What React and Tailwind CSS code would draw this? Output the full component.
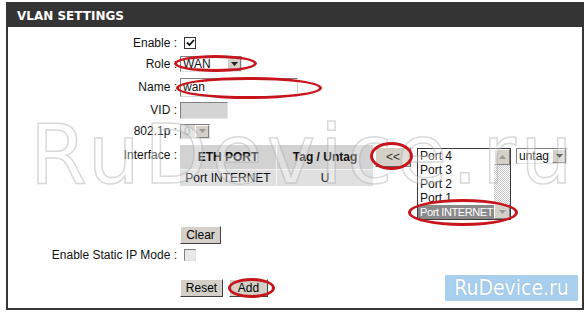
import React from 'react';

function Label({ children }) {
  return <div className="w-[170px] shrink-0 text-right pr-[1px] text-[12px] text-[#111]">{children}</div>;
}

function Arrow({ up = false, light = false }) {
  return (
    <svg width="7" height="4" viewBox="0 0 7 4" className={up ? 'rotate-180' : ''}>
      <path d="M0 0 L7 0 L3.5 4 Z" fill={light ? '#9a9a9a' : '#222'} />
    </svg>
  );
}

function DropBtn({ light = false }) {
  return (
    <span className="w-[14px] h-full flex items-center justify-center bg-[#d4d0c8] border-l border-t border-white border-r border-b border-r-[#808080] border-b-[#808080]">
      <Arrow light={light} />
    </span>
  );
}

function Btn({ children, w }) {
  return (
    <button className={`${w} h-[18px] bg-[#d4d0c8] border border-t-white border-l-white border-b-[#404040] border-r-[#404040] text-[12px] leading-none text-black`}>
      {children}
    </button>
  );
}

function Ellipse({ cls }) {
  return <div className={`absolute rounded-[50%] border-[3px] border-[#c8141c] pointer-events-none ${cls}`} />;
}

export default function App() {
  const ports = ['Port 4', 'Port 3', 'Port 2', 'Port 1'];
  return (
    <div className="relative w-[588px] h-[312px] bg-white overflow-hidden font-['Liberation_Sans',Arial,sans-serif]">
      <div className="ml-[6px] mt-[2px] w-[578px] h-[308px] flex flex-col">
        <div className="h-[25px] shrink-0 bg-[#343434] text-white font-bold text-[12px] pl-[11px] pt-[2px] flex items-center font-['DejaVu_Sans',Verdana,sans-serif]">
          VLAN SETTINGS
        </div>
        <div className="flex-1 border-2 border-t-0 border-[#353535] flex flex-col pt-[6px]">
          <div className="h-[20px] flex items-center">
            <Label>Enable :</Label>
            <span className="ml-[6px] w-[12px] h-[12px] border border-[#333] bg-white flex items-center justify-center">
              <svg width="9" height="8" viewBox="0 0 9 8">
                <path d="M1 3.5 L3.5 6 L8 1" stroke="#111" strokeWidth="1.8" fill="none" />
              </svg>
            </span>
          </div>
          <div className="h-[21px] flex items-center">
            <Label>Role :</Label>
            <span className="ml-[2px] w-[62px] h-[16px] flex items-stretch bg-white border border-t-[#808080] border-l-[#808080] border-r-[#e0e0e0] border-b-[#e0e0e0]">
              <span className="flex-1 pl-[2px] text-[12px] leading-[14px] text-[#111]">WAN</span>
              <DropBtn />
            </span>
          </div>
          <div className="h-[26px] flex items-center">
            <Label>Name :</Label>
            <span className="ml-[2px] w-[118px] h-[19px] bg-white border border-t-[#808080] border-l-[#808080] border-r-[#d8d8d8] border-b-[#d8d8d8] pl-[2px] text-[12px] leading-[17px] text-[#111]">
              wan
            </span>
          </div>
          <div className="h-[20px] flex items-center">
            <Label>VID :</Label>
            <span className="ml-[2px] w-[48px] h-[17px] bg-[#d4d4d4] border border-t-[#808080] border-l-[#808080] border-r-[#e8e8e8] border-b-[#e8e8e8]" />
          </div>
          <div className="h-[22px] flex items-center">
            <Label>802.1p :</Label>
            <span className="ml-[2px] w-[30px] h-[15px] flex items-stretch bg-[#d8d8d8] border border-t-[#808080] border-l-[#808080] border-r-[#e0e0e0] border-b-[#e0e0e0]">
              <span className="flex-1 pl-[3px] text-[11px] leading-[13px] text-[#9a9a9a]">0</span>
              <DropBtn light />
            </span>
          </div>
          <div className="h-[78px] mt-[3px] flex items-start">
            <div className="pt-[1px]">
              <Label>Interface :</Label>
            </div>
            <div className="ml-[2px] w-[192px] grid grid-cols-[96px_96px] gap-px bg-[#f2f2f2] text-[12px] text-[#111]">
              <div className="h-[24px] bg-[#d2d2d2] font-bold flex items-center justify-center">ETH PORT</div>
              <div className="h-[24px] bg-[#d2d2d2] font-bold flex items-center justify-center">Tag / Untag</div>
              <div className="h-[16px] bg-[#e0e0e0] flex items-center justify-center">Port INTERNET</div>
              <div className="h-[16px] bg-[#e0e0e0] flex items-center justify-center">U</div>
            </div>
            <button className="ml-[3px] mt-[2px] w-[36px] h-[20px] bg-[#d4d0c8] border border-t-white border-l-white border-b-[#606060] border-r-[#606060] text-[12px] leading-none text-[#333]">
              &lt;&lt;
            </button>
            <div className="ml-[6px] mt-[3px] w-[94px] h-[72px] bg-white border border-[#3a3a3a] flex">
              <div className="flex-1 flex flex-col text-[12px] leading-[14px] text-[#111]">
                {ports.map((p) => (
                  <div key={p} className="h-[14px] pl-[2px]">{p}</div>
                ))}
                <div className="h-[14px] pl-[2px] bg-[#8a8a8a] text-white text-[11px] tracking-[-0.4px]">Port INTERNET</div>
              </div>
              <div className="w-[16px] flex flex-col [background:repeating-conic-gradient(#c4c4c4_0%_25%,#ffffff_0%_50%)_0_0/2px_2px]">
                <span className="h-[16px] bg-[#d4d0c8] border border-t-white border-l-white border-b-[#808080] border-r-[#808080] flex items-center justify-center">
                  <Arrow up light />
                </span>
                <span className="flex-1" />
                <span className="h-[15px] bg-[#d4d0c8] border border-t-white border-l-white border-b-[#808080] border-r-[#808080] flex items-center justify-center">
                  <Arrow light />
                </span>
              </div>
            </div>
            <span className="ml-[5px] mt-[3px] w-[51px] h-[16px] flex items-stretch bg-white border border-t-[#808080] border-l-[#808080] border-r-[#e0e0e0] border-b-[#e0e0e0]">
              <span className="flex-1 pl-[2px] text-[12px] leading-[14px] text-[#111]">untag</span>
              <DropBtn />
            </span>
          </div>
          <div className="h-[22px] flex items-center">
            <div className="w-[170px] shrink-0" />
            <span className="ml-[2px]"><Btn w="w-[41px]">Clear</Btn></span>
          </div>
          <div className="h-[20px] flex items-center">
            <Label>Enable Static IP Mode :</Label>
            <span className="ml-[6px] w-[12px] h-[12px] border border-t-[#808080] border-l-[#808080] border-b-[#e0e0e0] border-r-[#e0e0e0] bg-[#e8e8e8]" />
          </div>
          <div className="h-[18px] mt-[14px] flex items-center">
            <div className="w-[170px] shrink-0" />
            <span className="ml-[2px] flex gap-[6px]">
              <Btn w="w-[43px]">Reset</Btn>
              <Btn w="w-[39px]">Add</Btn>
            </span>
          </div>
        </div>
      </div>

      <div className="absolute left-[30px] top-[114px] text-[82px] leading-none tracking-[4.5px] font-['DejaVu_Sans',sans-serif] text-white/30 [-webkit-text-stroke:1.5px_rgba(170,170,170,0.45)] pointer-events-none whitespace-nowrap">
        RuDevice.ru
      </div>

      <div className="absolute left-[445px] top-[275px] w-[133px] h-[26px] bg-[#a8cfee] flex items-center justify-center text-white text-[21px] leading-none font-['DejaVu_Sans_Condensed','Liberation_Sans',sans-serif] [text-shadow:0_0_1px_#7fa8c8]">
        RuDevice.ru
      </div>

      <Ellipse cls="left-[174px] top-[55px] w-[83px] h-[17px]" />
      <Ellipse cls="left-[176px] top-[77px] w-[146px] h-[22px]" />
      <Ellipse cls="left-[370px] top-[142px] w-[43px] h-[28px]" />
      <Ellipse cls="left-[408px] top-[199px] w-[110px] h-[27px]" />
      <Ellipse cls="left-[228px] top-[278px] w-[47px] h-[20px]" />
    </div>
  );
}
